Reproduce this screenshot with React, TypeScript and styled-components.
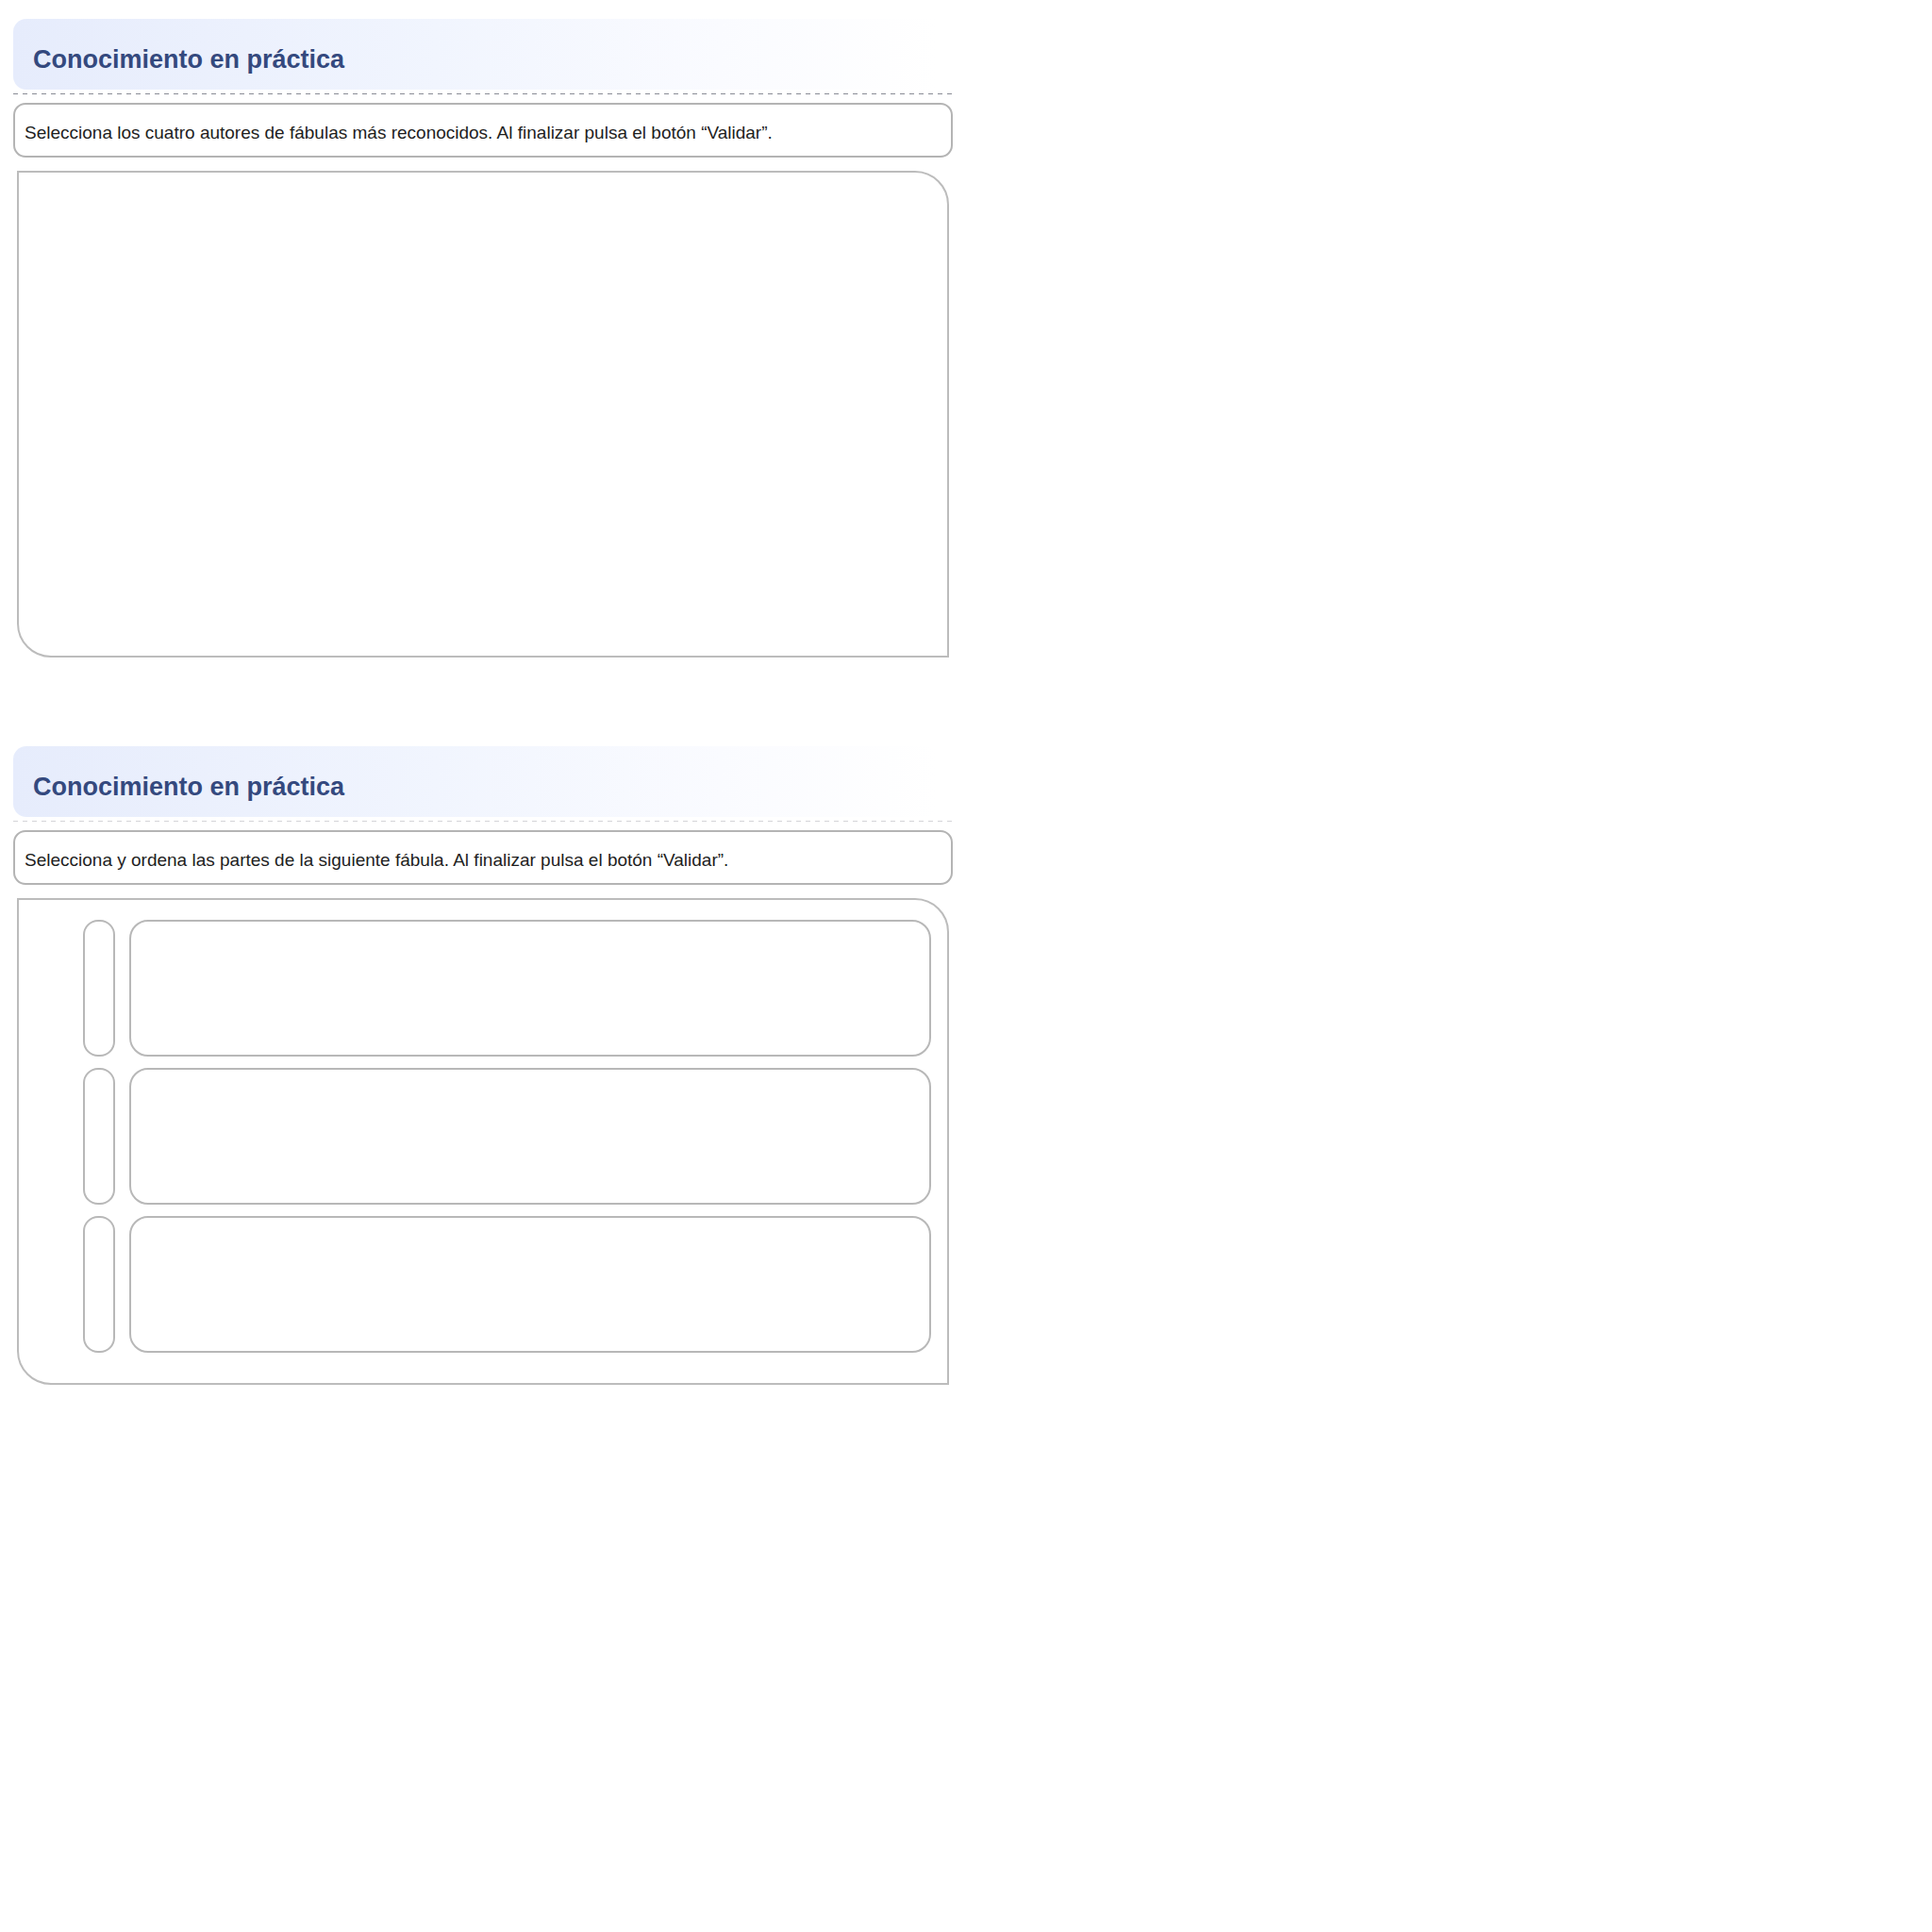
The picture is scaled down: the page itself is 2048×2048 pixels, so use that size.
import React from "react";
import styled, { createGlobalStyle } from "styled-components";

const GlobalStyle = createGlobalStyle`
  html, body {
    margin: 0;
    padding: 0;
    background: #ffffff;
  }
  body {
    font-family: "Liberation Sans", Arial, sans-serif;
  }
`;

const Page = styled.div`
  display: flex;
  flex-direction: column;
  gap: 94px;
  padding: 20px 0 0 14px;
  width: 999px;
`;

const Activity = styled.section`
  display: flex;
  flex-direction: column;
`;

const Header = styled.header`
  height: 75px;
  box-sizing: border-box;
  padding: 28px 0 0 21px;
  border-radius: 14px 0 0 14px;
  background: linear-gradient(to right, #e6ecfc 0%, #f1f5fe 45%, #fafbff 75%, #ffffff 98%);
`;

const Title = styled.h2`
  margin: 0;
  font-size: 27px;
  line-height: 30px;
  font-weight: bold;
  color: #34497e;
`;

const Divider = styled.div<{ $light?: boolean }>`
  height: 1px;
  margin-top: 4px;
  background: repeating-linear-gradient(
    to right,
    ${(p) => (p.$light ? "#d4d4d8" : "#8a8d96")} 0 5px,
    transparent 5px 10px
  );
`;

const Instruction = styled.p`
  margin: 9px 3px 0 0;
  height: 58px;
  box-sizing: border-box;
  display: flex;
  align-items: center;
  padding: 6px 10px 0;
  border: 2px solid #b4b4b4;
  border-radius: 13px;
  font-size: 19px;
  color: #1e1e1e;
`;

const Board = styled.div`
  margin: 14px 7px 0 4px;
  height: 516px;
  box-sizing: border-box;
  border: 2px solid #bcbcbc;
  border-radius: 0 36px 0 36px;
  padding: 21px 17px 0 68px;
  display: flex;
  flex-direction: column;
  gap: 12px;
`;

const Row = styled.div`
  display: flex;
  gap: 15px;
  height: 145px;
`;

const Handle = styled.div`
  width: 34px;
  box-sizing: border-box;
  border: 2px solid #b8b8b8;
  border-radius: 16px;
`;

const Slot = styled.div`
  flex: 1;
  box-sizing: border-box;
  border: 2px solid #b8b8b8;
  border-radius: 20px;
`;

const activities = [
  {
    id: 1,
    text: "Selecciona los cuatro autores de fábulas más reconocidos. Al finalizar pulsa el botón “Validar”.",
    rows: 0,
    light: false,
  },
  {
    id: 2,
    text: "Selecciona y ordena las partes de la siguiente fábula. Al finalizar pulsa el botón “Validar”.",
    rows: 3,
    light: true,
  },
];

export default function App() {
  return (
    <>
      <GlobalStyle />
      <Page>
        {activities.map((a) => (
          <Activity key={a.id}>
            <Header>
              <Title>Conocimiento en práctica</Title>
            </Header>
            <Divider $light={a.light} />
            <Instruction>{a.text}</Instruction>
            <Board>
              {Array.from({ length: a.rows }).map((_, i) => (
                <Row key={i}>
                  <Handle />
                  <Slot />
                </Row>
              ))}
            </Board>
          </Activity>
        ))}
      </Page>
    </>
  );
}
